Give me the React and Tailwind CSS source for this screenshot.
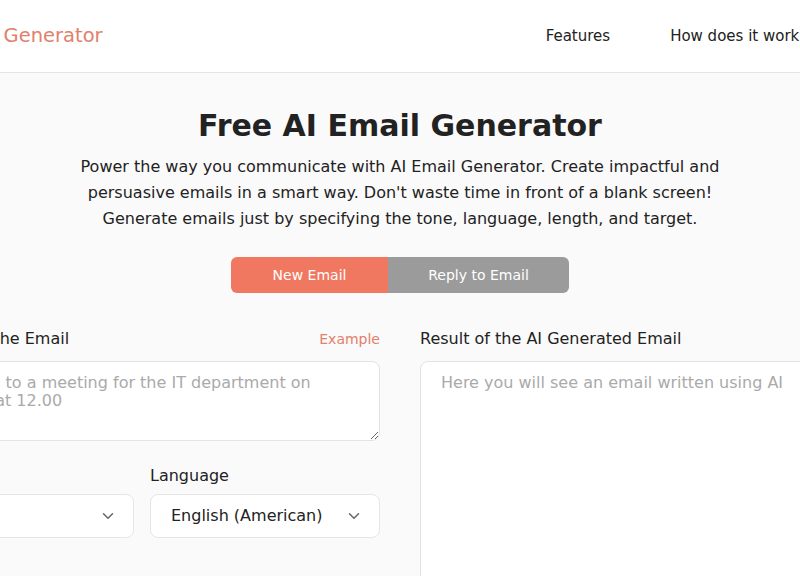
import { ChevronDown } from 'lucide-react';

const font = { fontFamily: '"DejaVu Sans", sans-serif' };

function Select({ value }) {
  return (
    <div className="flex items-center justify-between h-[44px] rounded-lg border border-[#e6e6e6] bg-white pl-5 pr-4 text-base text-[#222]">
      <span>{value}</span>
      <ChevronDown className="w-[18px] h-[18px] text-[#666]" strokeWidth={2} />
    </div>
  );
}

export default function App() {
  return (
    <div className="w-full min-h-[576px] overflow-hidden bg-[#fafafa] font-['DejaVu_Sans',sans-serif]" style={font}>
      {/* Header */}
      <header className="h-[73px] bg-white border-b border-[#e3e3e3]">
        <div className="w-[1200px] -ml-[82px] h-full flex items-center">
          <span className="text-[19.5px] text-[#e2806b]">AI Email Generator</span>
          <nav className="ml-[443px] flex items-center gap-[60px] text-[15px] text-[#222]">
            <a>Features</a>
            <a>How does it work</a>
            <a>FAQ</a>
          </nav>
        </div>
      </header>

      {/* Hero */}
      <section className="flex flex-col items-center pt-[35px]">
        <h1 className="text-[30px] font-bold text-[#222] leading-[36px]">Free AI Email Generator</h1>
        <p className="mt-[10px] max-w-[650px] text-center text-base leading-[26px] text-[#222]">
          Power the way you communicate with AI Email Generator. Create impactful and persuasive emails in a smart way. Don't waste time in front of a blank screen! Generate emails just by specifying the tone, language, length, and target.
        </p>
        <div className="mt-[25px] flex h-9 rounded-md overflow-hidden text-sm text-white">
          <button className="w-[157px] bg-[#f07860]">New Email</button>
          <button className="w-[181px] bg-[#9b9b9b]">Reply to Email</button>
        </div>
      </section>

      {/* Form */}
      <div className="w-[992px] -ml-[96px] mt-[34px] grid grid-cols-2 gap-x-10">
        <div>
          <div className="flex items-center justify-between h-[24px]">
            <label className="ml-[14px] text-base text-[#222]">Describe the Email</label>
            <span className="text-sm text-[#e2806b]">Example</span>
          </div>
          <textarea
            className="mt-[10px] block w-full h-[80px] rounded-lg border border-[#e3e3e3] bg-white px-5 pt-[12px] pb-[10px] text-base leading-[18px] placeholder:text-[#aaa] outline-none"
            placeholder="Invitation to a meeting for the IT department on Tuesday at 12.00"
          />
          <div className="mt-[23px] grid grid-cols-2 gap-4">
            <div>
              <div className="h-[24px] text-base text-[#222]">Tone</div>
              <div className="mt-[6px]">
                <Select value="Formal" />
              </div>
            </div>
            <div>
              <div className="h-[24px] text-base text-[#222]">Language</div>
              <div className="mt-[6px]">
                <Select value="English (American)" />
              </div>
            </div>
          </div>
        </div>
        <div>
          <div className="h-[24px] flex items-center text-base text-[#222]">Result of the AI Generated Email</div>
          <div className="mt-[10px] h-[300px] rounded-lg border border-[#e3e3e3] bg-white px-5 py-[10px] text-base leading-[22px] text-[#aaa]">
            Here you will see an email written using AI
          </div>
        </div>
      </div>
    </div>
  );
}
